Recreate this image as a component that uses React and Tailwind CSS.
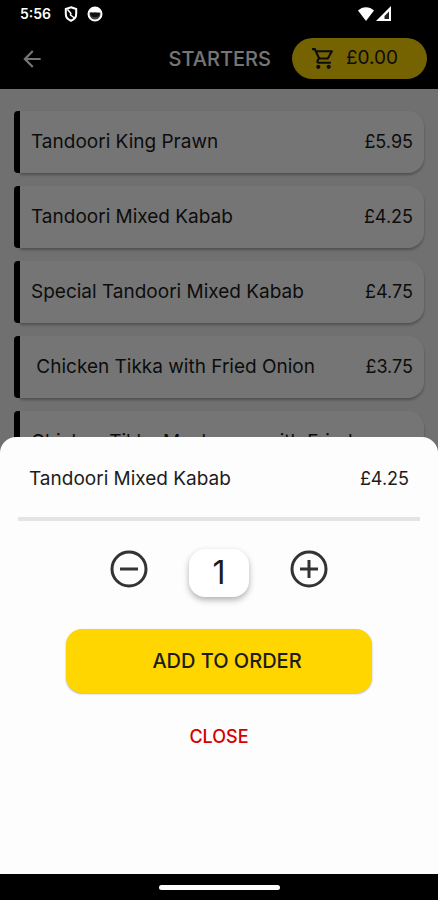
import React, { useState } from 'react';
import { MdArrowBack, MdOutlineShoppingCart } from 'react-icons/md';

const starters = [
  { id: 1, name: 'Tandoori King Prawn', price: '£5.95' },
  { id: 2, name: 'Tandoori Mixed Kabab', price: '£4.25' },
  { id: 3, name: 'Special Tandoori Mixed Kabab', price: '£4.75' },
  { id: 4, name: ' Chicken Tikka with Fried Onion', price: '£3.75' },
  { id: 5, name: 'Chicken Tikka Mushroom with Fried', price: '' },
];

const StatusBar = () => (
  <div className="flex h-7 shrink-0 items-center bg-black pl-5 pr-[46px] text-white">
    <span className="text-sm font-semibold">5:56</span>
    <svg className="ml-3 h-4 w-4" viewBox="0 0 16 16" fill="none" stroke="currentColor" strokeWidth="2">
      <path d="M8 1.2 13.2 3v5c0 3.2-2.2 5.600-5.200 6.800C5 13.600 2.800 11.200 2.800 8V3z" />
      <path d="m4.500 3.500 3.500 4M8 7l-.5 2 4 3" strokeWidth="1.500" />
    </svg>
    <svg className="ml-2 h-4 w-4" viewBox="0 0 16 16">
      <circle cx="8" cy="8" r="6.500" fill="#444" stroke="#fff" strokeWidth="2" />
      <path d="M2.500 6.500C3.500 3 6 2 8 2s4.500 1 5.500 4.500z" fill="#fff" />
      <path d="M3 7c1.500-1 2.500.3 4-.3s3.500.8 6 .3L12 10l-2 1H6l-2-1z" fill="#111" />
    </svg>
    <svg className="ml-auto h-4 w-4" viewBox="0 0 16 16">
      <path d="M0 4.500c4.500-4.500 11.500-4.500 16 0L8 15z" fill="currentColor" />
    </svg>
    <svg className="ml-0.5 h-4 w-4" viewBox="0 0 16 16">
      <path d="M15 0v15H0z" fill="currentColor" />
      <path d="M13 5.500V13H8.500v-3z" fill="#222" />
    </svg>
  </div>
);

const Header = () => (
  <header className="flex h-[61px] shrink-0 items-center bg-black pl-[19px] pr-[11px] text-white">
    <button type="button" aria-label="Back">
      <MdArrowBack size={26} />
    </button>
    <h1 className="ml-auto text-xl font-medium">STARTERS</h1>
    <button
      type="button"
      className="ml-[21px] flex h-[41px] w-[135px] items-center gap-2.5 rounded-full bg-[#ffd600] pl-[19px] text-[19px] text-[#1c1c1c]"
    >
      <MdOutlineShoppingCart size={25} />
      £0.00
    </button>
  </header>
);

const MenuItem = ({ item }) => (
  <li className="flex">
    <span className="w-[6px] shrink-0 rounded-l-sm bg-black" />
    <button
      type="button"
      className="flex min-h-[62px] flex-1 items-center justify-between rounded-r-2xl bg-white px-[11px] text-left text-[#1c1c1c] shadow-[0_2px_3px_rgba(0,0,0,0.3)]"
    >
      <span className="whitespace-pre text-[19px]">{item.name}</span>
      <span className="text-lg">{item.price}</span>
    </button>
  </li>
);

const QuantityIcon = ({ plus }) => (
  <svg className="h-10 w-10" viewBox="0 0 40 40" fill="none" stroke="currentColor" strokeWidth="3">
    <circle cx="20" cy="20" r="17" />
    <path d="M11 20h18" />
    {plus && <path d="M20 11v18" />}
  </svg>
);

const OrderSheet = ({ item }) => {
  const [quantity, setQuantity] = useState(1);

  return (
    <section
      role="dialog"
      aria-label={item.name}
      className="absolute inset-x-0 bottom-0 rounded-t-2xl bg-[#fdfdfd] px-[18px] pb-[125px] text-[#1c1c1c]"
    >
      <div className="flex h-20 items-center justify-between px-[11px] pt-1">
        <h2 className="text-[19px]">{item.name}</h2>
        <span className="text-lg">{item.price}</span>
      </div>
      <hr className="h-1 border-0 bg-[#e4e4e4]" />
      <div className="mt-7 flex items-start justify-center gap-10">
        <button
          type="button"
          aria-label="Remove one"
          className="text-[#333]"
          onClick={() => setQuantity(Math.max(1, quantity - 1))}
        >
          <QuantityIcon />
        </button>
        <output className="flex h-12 w-[60px] items-center justify-center rounded-2xl bg-white text-[32px] shadow-[0_3px_6px_rgba(0,0,0,0.3)]">
          {quantity}
        </output>
        <button
          type="button"
          aria-label="Add one"
          className="text-[#333]"
          onClick={() => setQuantity(quantity + 1)}
        >
          <QuantityIcon plus />
        </button>
      </div>
      <div className="mt-8 px-12">
        <button
          type="button"
          className="h-16 w-full rounded-2xl bg-[#ffd600] pl-4 text-xl font-medium shadow-[0_1px_2px_rgba(0,0,0,0.3)]"
        >
          ADD TO ORDER
        </button>
      </div>
      <div className="mt-8 flex justify-center">
        <button type="button" className="text-lg/6 font-medium text-[#d50000]">
          CLOSE
        </button>
      </div>
    </section>
  );
};

const App = () => {
  return (
    <div className="flex h-screen flex-col overflow-hidden bg-black font-['Inter',sans-serif]">
      <StatusBar />
      <main className="relative flex min-h-0 flex-1 flex-col overflow-hidden bg-[#f5f5f5]">
        <Header />
        <ul className="flex flex-col gap-[13px] px-[14px] pt-[22px]">
          {starters.map((item) => (
            <MenuItem key={item.id} item={item} />
          ))}
        </ul>
        <div className="absolute inset-0 bg-black/54" />
        <OrderSheet item={starters[1]} />
      </main>
      <div className="flex h-[26px] shrink-0 items-center justify-center bg-black">
        <span className="h-[5px] w-[121px] rounded-full bg-white" />
      </div>
    </div>
  );
};

export default App;
